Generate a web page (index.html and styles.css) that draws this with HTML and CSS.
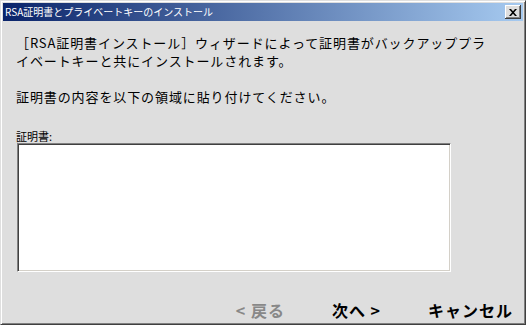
FILE: index.html
```html
<!DOCTYPE html>
<html>
<head>
    <meta name="viewport" content="width=device-width, initial-scale=1.0">
    <link rel="stylesheet" href="styles.css">
</head>
<body>
    <div class="window">
        <div class="titlebar">
            <span class="title">RSA証明書とプライベートキーのインストール</span>
            <button class="close" aria-label="閉じる">
                <svg width="8" height="7" viewBox="0 0 8 7">
                    <path d="M0 0h2l2 2.2L6 0h2L5 3.5 8 7H6L4 4.8 2 7H0l3-3.5z" fill="#000"/>
                </svg>
            </button>
        </div>
        <div class="content">
            <p class="intro">
                <span class="line">［RSA証明書インストール］ウィザードによって証明書がバックアッププラ</span>
                <span class="line">イベートキーと共にインストールされます。</span>
            </p>
            <p class="hint"><span class="line">証明書の内容を以下の領域に貼り付けてください。</span></p>
            <label class="label" for="cert">証明書:</label>
            <textarea class="cert" id="cert"></textarea>
            <div class="buttons">
                <span class="btn disabled">&lt; 戻る</span>
                <span class="btn">次へ &gt;</span>
                <span class="btn">キャンセル</span>
            </div>
        </div>
    </div>
</body>
</html>
```

FILE: styles.css
```css
html, body {
    margin: 0;
    background: #dedede;
}
body {
    font-family: "Noto Sans CJK JP", "Liberation Sans", sans-serif;
    color: #000;
}
.window {
    box-sizing: border-box;
    width: 526px;
    height: 325px;
    padding: 1px;
    background: #dedede;
    border-top: 1px solid #dfdfdf;
    border-left: 1px solid #dfdfdf;
    border-right: 1px solid #404040;
    border-bottom: 1px solid #404040;
    box-shadow: inset 1px 1px #fff, inset -1px -1px #808080;
    overflow: hidden;
}
.titlebar {
    height: 18px;
    margin: 1px;
    display: flex;
    align-items: center;
    justify-content: space-between;
    background: linear-gradient(to right, #0a246a, #a6caf0);
}
.title {
    color: #fff;
    font-size: 10px;
    line-height: 14px;
    padding-left: 2px;
    white-space: nowrap;
}
.close {
    box-sizing: border-box;
    width: 16px;
    height: 14px;
    margin-right: 2px;
    padding: 0;
    display: flex;
    align-items: center;
    justify-content: center;
    background: #dedede;
    border: none;
    box-shadow: inset -1px -1px #404040, inset 1px 1px #fff, inset -2px -2px #808080;
}
.content {
    padding: 12px 11px 0 14px;
}
.intro, .hint {
    margin: 0;
    font-size: 13px;
    letter-spacing: 0.9px;
    white-space: nowrap;
}
.line {
    display: block;
    height: 18px;
    line-height: 18px;
}
.hint {
    margin-top: 18px;
}
.label {
    display: block;
    margin-top: 24px;
    font-size: 11px;
    line-height: 13px;
}
.cert {
    display: block;
    box-sizing: border-box;
    width: 434px;
    height: 129px;
    margin: 0 0 0 1px;
    padding: 2px;
    resize: none;
    background: #fff;
    border-top: 1px solid #808080;
    border-left: 1px solid #808080;
    border-right: 1px solid #fff;
    border-bottom: 1px solid #fff;
    box-shadow: inset 1px 1px #404040, inset -1px -1px #d4d0c8;
    outline: none;
}
.buttons {
    display: flex;
    justify-content: flex-end;
    gap: 47px;
    margin-top: 28px;
}
.btn {
    font-size: 16px;
    font-weight: bold;
    letter-spacing: 1px;
    line-height: 20px;
    white-space: nowrap;
}
.btn.disabled {
    color: #888;
}
```
